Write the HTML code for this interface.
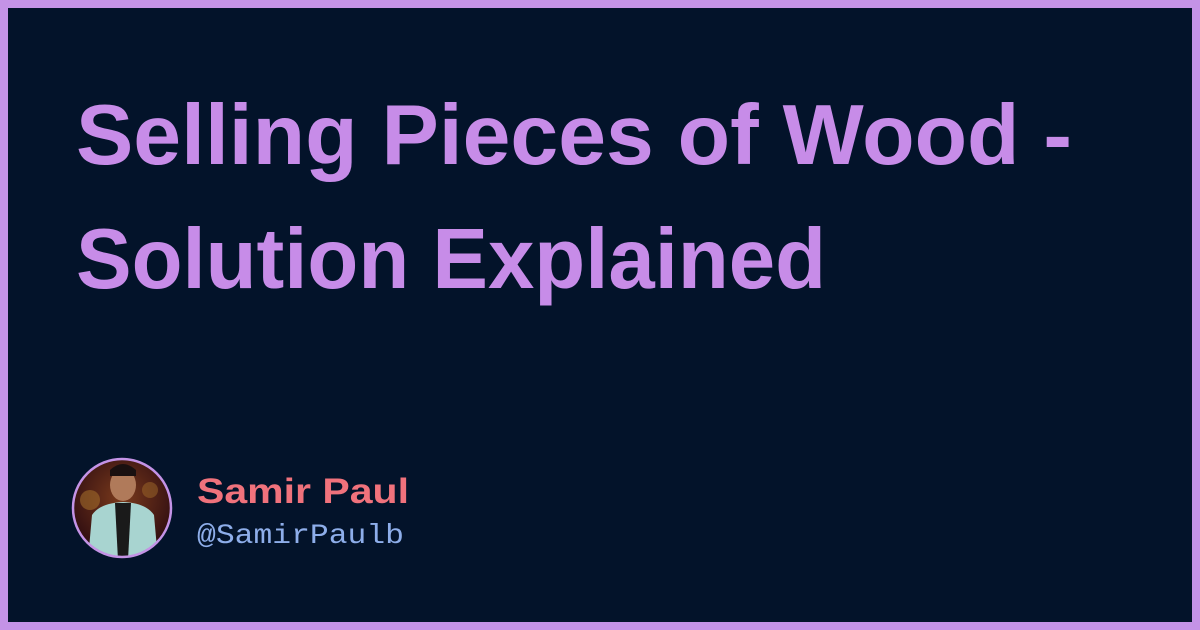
<!DOCTYPE html>
<html><head><style>
html,body{margin:0;padding:0}
body{width:1200px;height:630px;overflow:hidden;background:#c493e6;position:relative}
.inner{position:absolute;left:8px;top:8px;width:1184px;height:614px;background:#03132a}
</style></head><body>
<div class="inner"></div>
<svg width="1200" height="630" style="position:absolute;left:0;top:0">
<defs><clipPath id="c"><circle cx="122" cy="508" r="48"/></clipPath>
<radialGradient id="g" cx="0.5" cy="0.4" r="0.6"><stop offset="0" stop-color="#7a3a1c"/><stop offset="1" stop-color="#2a0a10"/></radialGradient></defs>
<g font-family="Liberation Sans, sans-serif" font-weight="bold" fill="#c78ce8" font-size="85">
<text x="76" y="164" textLength="996" lengthAdjust="spacingAndGlyphs">Selling Pieces of Wood -</text>
<text x="76" y="288" textLength="750" lengthAdjust="spacingAndGlyphs">Solution Explained</text>
</g>
<g clip-path="url(#c)">
<rect x="70" y="456" width="104" height="104" fill="url(#g)"/>
<circle cx="90" cy="500" r="10" fill="#a06a2a" opacity=".6"/>
<circle cx="150" cy="490" r="8" fill="#a06a2a" opacity=".5"/>
<ellipse cx="123" cy="485" rx="13" ry="16" fill="#b07a5a"/>
<path d="M110 470 q13 -12 26 0 l0 6 l-26 0z" fill="#1a1010"/>
<path d="M88 560 L92 515 Q100 503 123 502 Q146 503 154 515 L158 560Z" fill="#a8d4d0"/>
<path d="M115 503 L131 503 L128 560 L118 560Z" fill="#1a1a1a"/>
</g>
<circle cx="122" cy="508" r="49" fill="none" stroke="#c493e6" stroke-width="2.5"/>
<text x="197" y="503" font-family="Liberation Sans, sans-serif" font-weight="bold" font-size="35" fill="#f0727c" textLength="212" lengthAdjust="spacingAndGlyphs">Samir Paul</text>
<text x="197" y="543" font-family="Liberation Mono, monospace" font-size="28" fill="#8eaeea" textLength="207" lengthAdjust="spacingAndGlyphs">@SamirPaulb</text>
</svg>
</body></html>
